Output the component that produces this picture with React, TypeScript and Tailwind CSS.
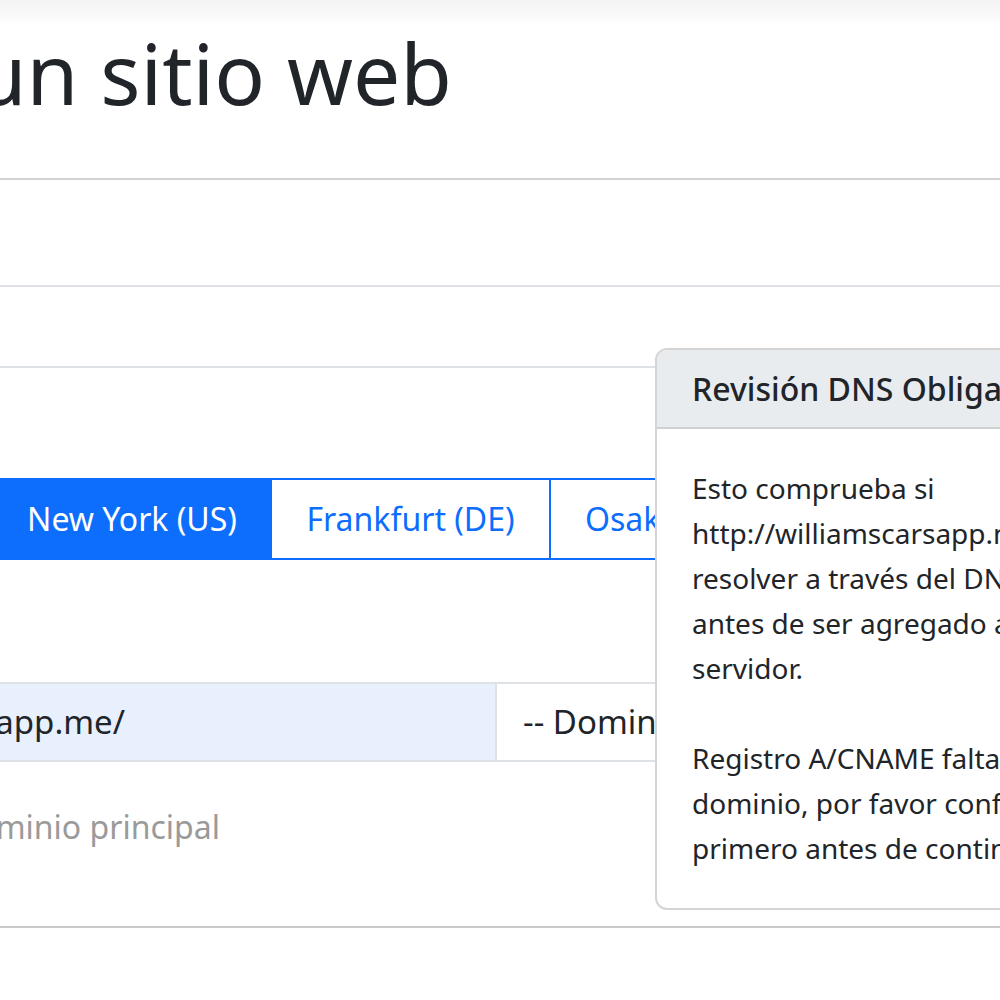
import React from 'react';

const tabs = ['New York (US)', 'Frankfurt (DE)', 'Osaka (JP)'];

const popoverLines = [
  'Esto comprueba si',
  'http://williamscarsapp.me/ puede',
  'resolver a través del DNS del servidor',
  'antes de ser agregado a este',
  'servidor.',
  '',
  'Registro A/CNAME faltante para el',
  'dominio, por favor configúrelo',
  'primero antes de continuar.',
];

const App = () => {
  return (
    <div
      className="relative w-[1000px] h-[1000px] overflow-hidden bg-white text-[#212529]"
      style={{ fontFamily: '"Noto Sans", "Open Sans", sans-serif' }}
    >
      {/* top bar shadow */}
      <div className="h-[26px] bg-gradient-to-b from-[#f3f3f3] to-white" />

      {/* title */}
      <div className="h-[152px] flex">
        <div className="w-[452px] shrink-0 flex justify-end">
          <h1 className="whitespace-nowrap text-[84px] leading-[100px] -mt-[3px]">un sitio web</h1>
        </div>
      </div>
      <div className="h-[2px] bg-[#d2d2d2]" />

      <div className="h-[105px]" />
      <div className="h-[2px] bg-[#dee2e6]" />
      <div className="h-[79px]" />

      {/* card */}
      <div className="border-t-2 border-b-2 border-t-[#dee2e6] border-b-[#cacaca]">
        <div className="h-[110px]" />

        <div className="flex -ml-[8px]">
          {tabs.map((t, i) => (
            <div
              key={t}
              className={
                i === 0
                  ? 'w-[280px] h-[82px] shrink-0 flex items-center justify-center border-2 border-[#0d6efd] bg-[#0d6efd] text-white text-[32px] whitespace-nowrap'
                  : i === 1
                  ? 'w-[281px] h-[82px] shrink-0 -ml-[2px] flex items-center justify-center border-2 border-[#0d6efd] bg-white text-[#0d6efd] text-[32px] whitespace-nowrap'
                  : 'h-[82px] shrink-0 -ml-[2px] px-[34px] flex items-center border-2 border-[#0d6efd] bg-white text-[#0d6efd] text-[32px] whitespace-nowrap'
              }
            >
              {t}
            </div>
          ))}
        </div>

        <div className="h-[122px]" />

        {/* input group */}
        <div className="flex h-[80px] border-y-2 border-[#dee2e6]">
          <div className="w-[497px] shrink-0 bg-[#e8f0fe] border-r-2 border-[#dee2e6] flex items-center">
            <div className="w-[125px] shrink-0 flex justify-end">
              <span className="whitespace-nowrap text-[33px]">http://williamscarsapp.me/</span>
            </div>
          </div>
          <div className="flex-1 flex items-center pl-[26px]">
            <span className="whitespace-nowrap text-[33px]">-- Dominio --</span>
          </div>
        </div>

        <div className="h-[42px]" />
        <div className="flex">
          <div className="w-[220px] shrink-0 flex justify-end">
            <span className="whitespace-nowrap text-[32px] leading-[45px] text-[#9a9a9a]">dominio principal</span>
          </div>
        </div>
        <div className="h-[77px]" />
      </div>

      {/* popover */}
      <div className="absolute left-[655px] top-[348px] w-[460px] rounded-[12px] border-2 border-[#d4d4d4] bg-white">
        <div className="h-[79px] rounded-t-[10px] bg-[#e9ecef] border-b-2 border-[#cfcfcf] flex items-center pl-[35px]">
          <span className="whitespace-nowrap text-[32px] font-medium">Revisión DNS Obligatoria</span>
        </div>
        <div className="pl-[35px] pt-[37px] pb-[37px] text-[28px] leading-[45px]">
          {popoverLines.map((l, i) => (
            <div key={i} className="whitespace-nowrap h-[45px]">
              {l}
            </div>
          ))}
        </div>
      </div>
    </div>
  );
};

export default App;
